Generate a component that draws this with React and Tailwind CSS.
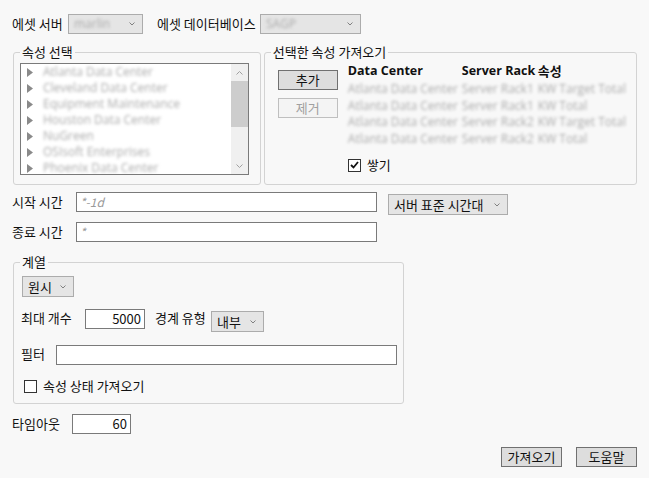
import React from "react";

const listItems = ["Atlanta Data Center", "Cleveland Data Center", "Equipment Maintenance", "Houston Data Center", "NuGreen", "OSIsoft Enterprises", "Phoenix Data Center"];
const picked = [
  ["Atlanta Data Center", "Server Rack1", "KW Target Total"],
  ["Atlanta Data Center", "Server Rack1", "KW Total"],
  ["Atlanta Data Center", "Server Rack2", "KW Target Total"],
  ["Atlanta Data Center", "Server Rack2", "KW Total"],
];

// the capture has these values blurred out; keep them faint
const blurText = "text-[#ababab] blur-[1.5px] font-['Open_Sans',sans-serif] text-[12px]";

export default function App() {
  return (
    <div className="w-[649px] h-[478px] overflow-hidden bg-[#f8f8f8] px-[12px] pt-[14px] text-[13px] leading-[16px] text-[#111] font-['Noto_Sans_CJK_KR','Noto_Sans',sans-serif]">
      <div className="flex h-[20px] items-center">
        <span className="w-[56px]">에셋 서버</span>
        <Dropdown value="marlin" blurred className="w-[75px]" />
        <span className="ml-[14px] w-[103px]">에셋 데이터베이스</span>
        <Dropdown value="SAGP" blurred className="w-[101px]" />
      </div>

      <div className="mt-[10px] flex gap-[3px]">
        <Group title="속성 선택" className="ml-[1px] h-[141px] w-[249px]">
          <AttributeList />
        </Group>
        <Group title="선택한 속성 가져오기" className="h-[141px] w-[375px]">
          <div className="flex pt-[3px] pl-[7px]">
            <div className="flex w-[70px] flex-col gap-[8px] pt-[7px]">
              <Button className="w-[60px] border-[#707070] bg-[#dddddd]">추가</Button>
              <Button className="w-[60px] border-[#bfbfbf] bg-[#f4f4f4] text-[#a0a0a0]">제거</Button>
            </div>
            <div>
              <div className="flex h-[18px] font-bold text-[12.5px] font-['Open_Sans','Noto_Sans_CJK_KR',sans-serif]">
                <span className="w-[114px]">Data Center</span>
                <span className="w-[76px]">Server Rack</span>
                <span className="font-['Noto_Sans_CJK_KR',sans-serif] text-[13px]">속성</span>
              </div>
              {picked.map((row, i) => (
                <div key={i} className={`flex h-[16.5px] items-center ${blurText}`}>
                  <span className="w-[114px]">{row[0]}</span>
                  <span className="w-[76px]">{row[1]}</span>
                  <span>{row[2]}</span>
                </div>
              ))}
              <div className="mt-[10px] flex items-center gap-[6px]">
                <Checkbox checked />
                <span>쌓기</span>
              </div>
            </div>
          </div>
        </Group>
      </div>

      <div className="mt-[7px] flex items-start">
        <span className="mt-[2px] w-[64px]">시작 시간</span>
        <TextBox className="w-[301px]"><span className="italic text-[#9a9a9a] text-[12px]">*-1d</span></TextBox>
        <Dropdown value="서버 표준 시간대" className="ml-[11px] mt-[2px] h-[21px] w-[120px]" />
      </div>
      <div className="mt-[7px] flex items-start">
        <span className="mt-[2px] w-[64px]">종료 시간</span>
        <TextBox className="w-[301px]"><span className="italic text-[#9a9a9a] text-[12px]">*</span></TextBox>
      </div>

      <Group title="계열" className="mt-[12px] ml-[1px] h-[150px] w-[390px]">
        <div className="pl-[1px] pt-[6px]">
          <Dropdown value="원시" className="ml-[1px] h-[21px] w-[52px]" />
          <div className="mt-[12px] flex items-start">
            <span className="mt-[1px] w-[64px]">최대 개수</span>
            <TextBox className="w-[60px] justify-end pr-[3px]">5000</TextBox>
            <span className="ml-[10px] mt-[1px] w-[56px]">경계 유형</span>
            <Dropdown value="내부" className="mt-[2px] h-[21px] w-[53px]" />
          </div>
          <div className="mt-[13px] flex items-start">
            <span className="mt-[1px] w-[35px]">필터</span>
            <TextBox className="w-[341px]" />
          </div>
          <div className="mt-[13px] flex items-center gap-[6px] pl-[3px]">
            <Checkbox />
            <span>속성 상태 가져오기</span>
          </div>
        </div>
      </Group>

      <div className="mt-[10px] flex items-center">
        <span className="w-[60px]">타임아웃</span>
        <TextBox className="w-[59px] justify-end pr-[3px]">60</TextBox>
      </div>

      <div className="mt-[13px] flex justify-end gap-[14px]">
        <Button className="w-[61px] border-[#707070] bg-[#dddddd]">가져오기</Button>
        <Button className="w-[61px] border-[#707070] bg-[#dddddd]">도움말</Button>
      </div>
    </div>
  );
}

function Group({ title, className = "", children }) {
  return (
    <fieldset className={`rounded-[3px] border border-[#d3d3d3] px-[6px] ${className}`}>
      <legend className="px-[2px] leading-[16px]">{title}</legend>
      {children}
    </fieldset>
  );
}

function AttributeList() {
  return (
    <div className="mt-[3px] flex h-[112px] w-[229px] border border-[#7a7a7a] bg-white">
      <div className="flex-1 overflow-hidden">
        {listItems.map((item) => (
          <div key={item} className="flex h-[16px] items-center">
            <svg width="6" height="9" viewBox="0 0 6 9" className="ml-[6px] mr-[10px] shrink-0">
              <path d="M0 0 L6 4.5 L0 9 Z" fill="#8a8a8a" />
            </svg>
            <span className={`whitespace-nowrap ${blurText}`}>{item}</span>
          </div>
        ))}
      </div>
      <div className="flex w-[17px] flex-col bg-[#f0f0f0]">
        <div className="flex h-[17px] items-center justify-center">
          <svg width="7" height="4" viewBox="0 0 7 4"><path d="M0.5 3.5 L3.5 0.5 L6.5 3.5" fill="none" stroke="#a0a0a0" /></svg>
        </div>
        <div className="h-[46px] bg-[#cdcdcd]" />
        <div className="flex-1" />
        <div className="flex h-[17px] items-center justify-center">
          <svg width="7" height="4" viewBox="0 0 7 4"><path d="M0.5 0.5 L3.5 3.5 L6.5 0.5" fill="none" stroke="#a0a0a0" /></svg>
        </div>
      </div>
    </div>
  );
}

function Dropdown({ value, blurred, className = "" }) {
  return (
    <div className={`flex h-[20px] items-center justify-between border border-[#acacac] bg-[#e5e5e5] pl-[5px] pr-[7px] ${className}`}>
      <span className={blurred ? blurText : ""}>{value}</span>
      <svg width="6" height="4" viewBox="0 0 6 4"><path d="M0.5 0.5 L3 3 L5.5 0.5" fill="none" stroke="#808080" /></svg>
    </div>
  );
}

function TextBox({ className = "", children }) {
  return <div className={`flex h-[20px] items-center border border-[#7a7a7a] bg-white px-[3px] ${className}`}>{children}</div>;
}

function Button({ className = "", children }) {
  return <div className={`flex h-[20px] items-center justify-center border ${className}`}>{children}</div>;
}

function Checkbox({ checked }) {
  return (
    <div className="flex h-[13px] w-[13px] items-center justify-center border border-[#333] bg-white">
      {checked && <svg width="9" height="8" viewBox="0 0 9 8"><path d="M1 4 L3.5 6.5 L8 1" fill="none" stroke="#111" strokeWidth="1.8" /></svg>}
    </div>
  );
}
